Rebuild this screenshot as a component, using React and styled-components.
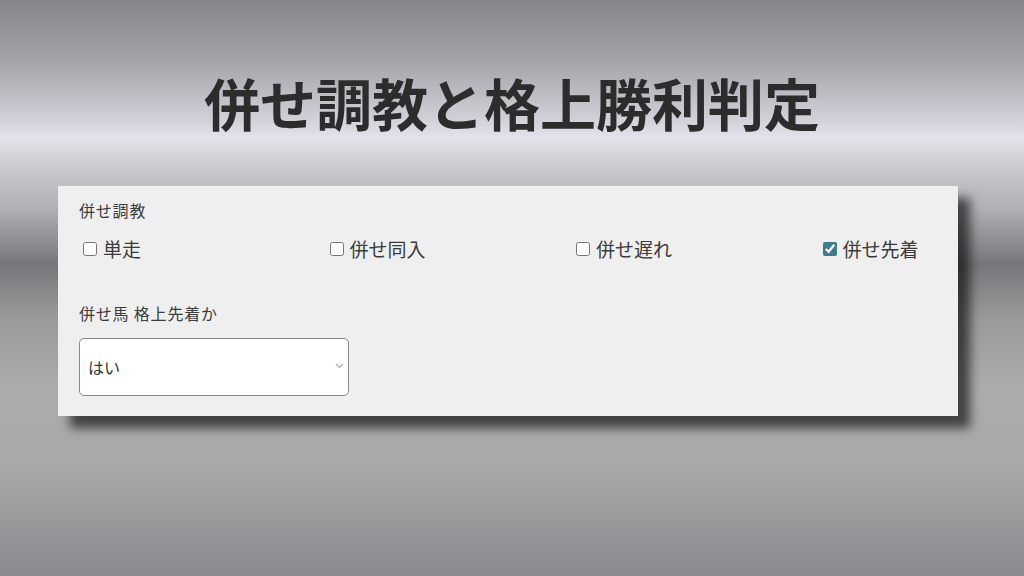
import React from "react";
import styled, { createGlobalStyle } from "styled-components";

const GlobalStyle = createGlobalStyle`
  html, body {
    margin: 0;
    padding: 0;
  }
  body {
    font-family: "Noto Sans CJK JP", "Noto Sans", sans-serif;
    color: #3a3a3a;
  }
`;

const Page = styled.div`
  width: 1024px;
  height: 576px;
  box-sizing: border-box;
  padding-top: 74px;
  overflow: hidden;
  background: linear-gradient(
    to bottom,
    #858489 0px,
    #a4a3a9 60px,
    #d4d2da 122px,
    #e5e2eb 138px,
    #cac9ce 168px,
    #afaeb3 210px,
    #77777b 264px,
    #9b9b9d 320px,
    #acacac 390px,
    #a8a8a9 470px,
    #8a898e 576px
  );
`;

const Title = styled.h1`
  margin: 0 0 56px;
  text-align: center;
  font-size: 56px;
  line-height: 56px;
  font-weight: 700;
  color: #2c2c2c;
`;

const Card = styled.div`
  margin-left: 58px;
  width: 900px;
  height: 230px;
  box-sizing: border-box;
  padding: 12px 21px 20px;
  background: #efefef;
  box-shadow: 12px 12px 10px rgba(0, 0, 0, 0.62);
`;

const FieldLabel = styled.div`
  font-size: 16px;
  line-height: 24px;
  letter-spacing: 0.8px;
  color: #3c3c3c;
  margin-top: ${(p) => p.$gap || 0}px;
`;

const CheckRow = styled.div`
  display: grid;
  grid-template-columns: repeat(3, 246.5px) auto;
  margin-top: 13px;
`;

const CheckItem = styled.label`
  display: flex;
  align-items: center;
  font-size: 19px;
  line-height: 27px;
  color: #3a3a3a;
`;

const Box = styled.input`
  width: 14px;
  height: 14px;
  margin: 0 6px 0 4px;
  accent-color: #3e7b8b;
`;

const SelectWrap = styled.div`
  position: relative;
  width: 270px;
  margin-top: 13px;
`;

const Select = styled.select`
  appearance: none;
  width: 270px;
  height: 58px;
  box-sizing: border-box;
  padding: 0 24px 0 8px;
  border: 1px solid #8a8a8a;
  border-radius: 5px;
  background: #fff;
  font-family: "Noto Sans CJK JP", sans-serif;
  font-size: 16px;
  color: #333;
`;

const Chevron = styled.svg`
  position: absolute;
  right: 5px;
  top: 25px;
  pointer-events: none;
`;

const options = [
  { label: "単走", checked: false },
  { label: "併せ同入", checked: false },
  { label: "併せ遅れ", checked: false },
  { label: "併せ先着", checked: true },
];

export default function App() {
  return (
    <Page>
      <GlobalStyle />
      <Title>併せ調教と格上勝利判定</Title>
      <Card>
        <FieldLabel>併せ調教</FieldLabel>
        <CheckRow>
          {options.map((o) => (
            <CheckItem key={o.label}>
              <Box type="checkbox" defaultChecked={o.checked} />
              {o.label}
            </CheckItem>
          ))}
        </CheckRow>
        <FieldLabel $gap={39}>併せ馬 格上先着か</FieldLabel>
        <SelectWrap>
          <Select defaultValue="yes">
            <option value="yes">はい</option>
            <option value="no">いいえ</option>
          </Select>
          <Chevron width="9" height="6" viewBox="0 0 9 6">
            <path d="M1 1l3.5 3.5L8 1" fill="none" stroke="#aaa" strokeWidth="1.2" />
          </Chevron>
        </SelectWrap>
      </Card>
    </Page>
  );
}
